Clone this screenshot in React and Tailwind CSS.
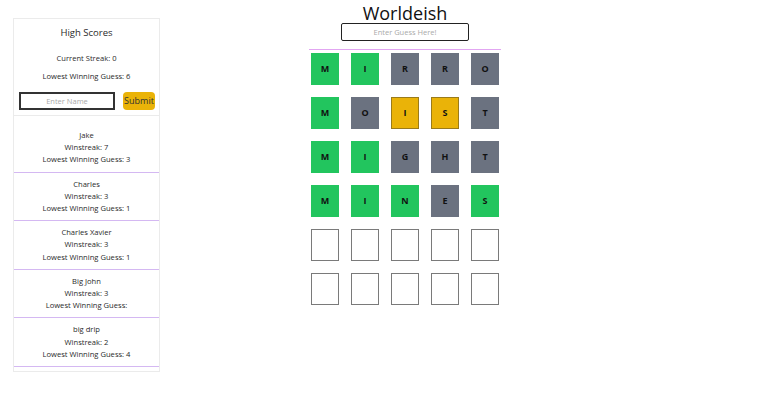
import React from "react";

const rows = [
  [["M","g"],["I","g"],["R","x"],["R","x"],["O","x"]],
  [["M","g"],["O","x"],["I","y"],["S","y"],["T","x"]],
  [["M","g"],["I","g"],["G","x"],["H","x"],["T","x"]],
  [["M","g"],["I","g"],["N","g"],["E","x"],["S","g"]],
  [["",""],["",""],["",""],["",""],["",""]],
  [["",""],["",""],["",""],["",""],["",""]],
];

const scores = [
  ["Jake", "7", "3"],
  ["Charles", "3", "1"],
  ["Charles Xavier", "3", "1"],
  ["Big John", "3", ""],
  ["big drip", "2", "4"],
];

function Tile({ l, c }) {
  let cls = "bg-white border border-[#7a7a7a]";
  if (c === "g") cls = "bg-[#22c55e]";
  if (c === "x") cls = "bg-[#6b7280]";
  if (c === "y") cls = "bg-[#eab308] border border-[#9a7b1a]";
  return (
    <div className={`w-[28px] h-[32px] flex items-center justify-center text-[9px] font-bold text-[#111] ${cls}`}>
      {l}
    </div>
  );
}

export default function App() {
  return (
    <div className="w-[764px] h-[402px] bg-white flex items-start text-[#2a2a2a]" style={{ fontFamily: '"Open Sans", "Noto Sans", sans-serif' }}>
      <aside className="ml-[13px] mt-[18px] w-[147px] border border-[#ebebeb] flex flex-col">
        <div className="flex flex-col items-center pt-[7px] pb-[5px] border-b border-[#ebebeb]">
          <div className="text-[9.5px] leading-[14px]">High Scores</div>
          <div className="mt-[12px] text-[7.6px] leading-[12px]">Current Streak: 0</div>
          <div className="mt-[6px] text-[7.6px] leading-[12px]">Lowest Winning Guess: 6</div>
          <div className="mt-[10px] flex items-center gap-[8px] w-full pl-[5px]">
            <input
              placeholder="Enter Name"
              className="w-[96px] h-[18px] border-2 border-[#333] text-center text-[7.5px] placeholder:text-[#aaa] outline-none"
            />
            <button className="w-[32px] h-[18px] rounded-[4px] bg-[#eab308] text-[9px] leading-[18px] text-[#333]">Submit</button>
          </div>
        </div>
        <div className="pt-[8px] pb-[4px] flex flex-col">
          {scores.map(([n, w, g]) => (
            <div key={n} className="pt-[5px] pb-[6px] border-b border-[#d4b8f2] flex flex-col items-center text-[7.6px] leading-[12.2px]">
              <div>{n}</div>
              <div>Winstreak: {w}</div>
              <div>Lowest Winning Guess: {g}</div>
            </div>
          ))}
        </div>
      </aside>
      <main className="ml-[149px] w-[192px] flex flex-col items-center pt-[3px]">
        <h1 className="text-[18px] leading-[20px] text-[#111]">Worldeish</h1>
        <input
          autoFocus
          placeholder="Enter Guess Here!"
          className="w-[128px] h-[18px] border-[1.5px] border-[#222] rounded-[2px] text-center text-[7.5px] placeholder:text-[#aaa] outline-none"
        />
        <div className="mt-[8px] w-full h-px bg-[#e2a6f2]" />
        <div className="w-full pt-[3px] px-[2px] grid grid-cols-[repeat(5,28px)] gap-x-[12px] gap-y-[12px]">
          {rows.map((r, i) => r.map(([l, c], j) => <Tile key={`${i}-${j}`} l={l} c={c} />))}
        </div>
      </main>
    </div>
  );
}
